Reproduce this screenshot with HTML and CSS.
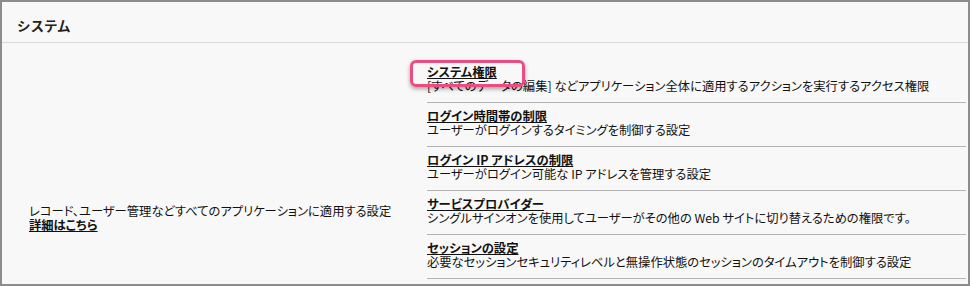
FILE: index.html
```html
<!DOCTYPE html>
<html lang="ja">
<head>
    <meta charset="UTF-8">
    <meta name="viewport" content="width=device-width, initial-scale=1.0">
    <title>システム</title>
    <link rel="stylesheet" href="styles.css">
</head>
<body>

    <div class="panel">
        <div class="panel-header">システム</div>

        <div class="panel-body">
            <div class="summary">
                <div class="summary-text">レコード、ユーザー管理などすべてのアプリケーションに適用する設定</div>
                <a href="#" class="more-link">詳細はこちら</a>
            </div>

            <ul class="setting-list">
                <li class="setting-item highlighted">
                    <a href="#" class="setting-title">システム権限</a>
                    <div class="setting-desc">[すべてのデータの編集] などアプリケーション全体に適用するアクションを実行するアクセス権限</div>
                    <span class="highlight-box"></span>
                </li>
                <li class="setting-item">
                    <a href="#" class="setting-title">ログイン時間帯の制限</a>
                    <div class="setting-desc">ユーザーがログインするタイミングを制御する設定</div>
                </li>
                <li class="setting-item">
                    <a href="#" class="setting-title">ログイン IP アドレスの制限</a>
                    <div class="setting-desc">ユーザーがログイン可能な IP アドレスを管理する設定</div>
                </li>
                <li class="setting-item">
                    <a href="#" class="setting-title">サービスプロバイダー</a>
                    <div class="setting-desc">シングルサインオンを使用してユーザーがその他の Web サイトに切り替えるための権限です。</div>
                </li>
                <li class="setting-item">
                    <a href="#" class="setting-title">セッションの設定</a>
                    <div class="setting-desc">必要なセッションセキュリティレベルと無操作状態のセッションのタイムアウトを制御する設定</div>
                </li>
            </ul>
        </div>
    </div>

</body>
</html>
```

FILE: styles.css
```css
body {
    margin: 0;
    font-family: 'Noto Sans CJK JP', 'Liberation Sans', sans-serif;
    color: #111;
    background: #fff;
}

.panel {
    width: 970px;
    height: 286px;
    box-sizing: border-box;
    border: 2px solid #8c8c8c;
    background-color: #f8f8f8;
    display: flex;
    flex-direction: column;
}

.panel-header {
    height: 41px;
    box-sizing: border-box;
    padding: 15px 15px 0;
    font-size: 13.5px;
    line-height: 17px;
    font-weight: bold;
    color: #222;
    border-bottom: 1px solid #d8d8d8;
}

.panel-body {
    flex: 1;
    display: flex;
}

/* lewa kolumna z opisem */
.summary {
    width: 425px;
    box-sizing: border-box;
    padding: 0 0 52px 27px;
    display: flex;
    flex-direction: column;
    justify-content: flex-end;
    font-size: 12.3px;
    line-height: 13.5px;
    font-feature-settings: "palt";
}

.more-link {
    color: #111;
    font-weight: bold;
    align-self: flex-start;
}

.setting-list {
    flex: 1;
    list-style: none;
    margin: 0;
    padding: 16px 2px 0 0;
}

.setting-item {
    position: relative;
    padding: 7px 0 9px;
    border-bottom: 1px solid #b4b4b4;
    font-size: 12.3px;
    line-height: 13.5px;
    font-feature-settings: "palt";
}

.setting-title {
    color: #111;
    font-weight: bold;
}

.setting-desc {
    white-space: nowrap;
}

/* ramka zaznaczenia na pierwszej pozycji */
.highlight-box {
    position: absolute;
    left: -17px;
    top: 1px;
    width: 115px;
    height: 27px;
    box-sizing: border-box;
    border: 3px solid #ec4c82;
    border-radius: 6px;
    box-shadow: 0 2px 4px rgba(0, 0, 0, 0.35);
}
```
